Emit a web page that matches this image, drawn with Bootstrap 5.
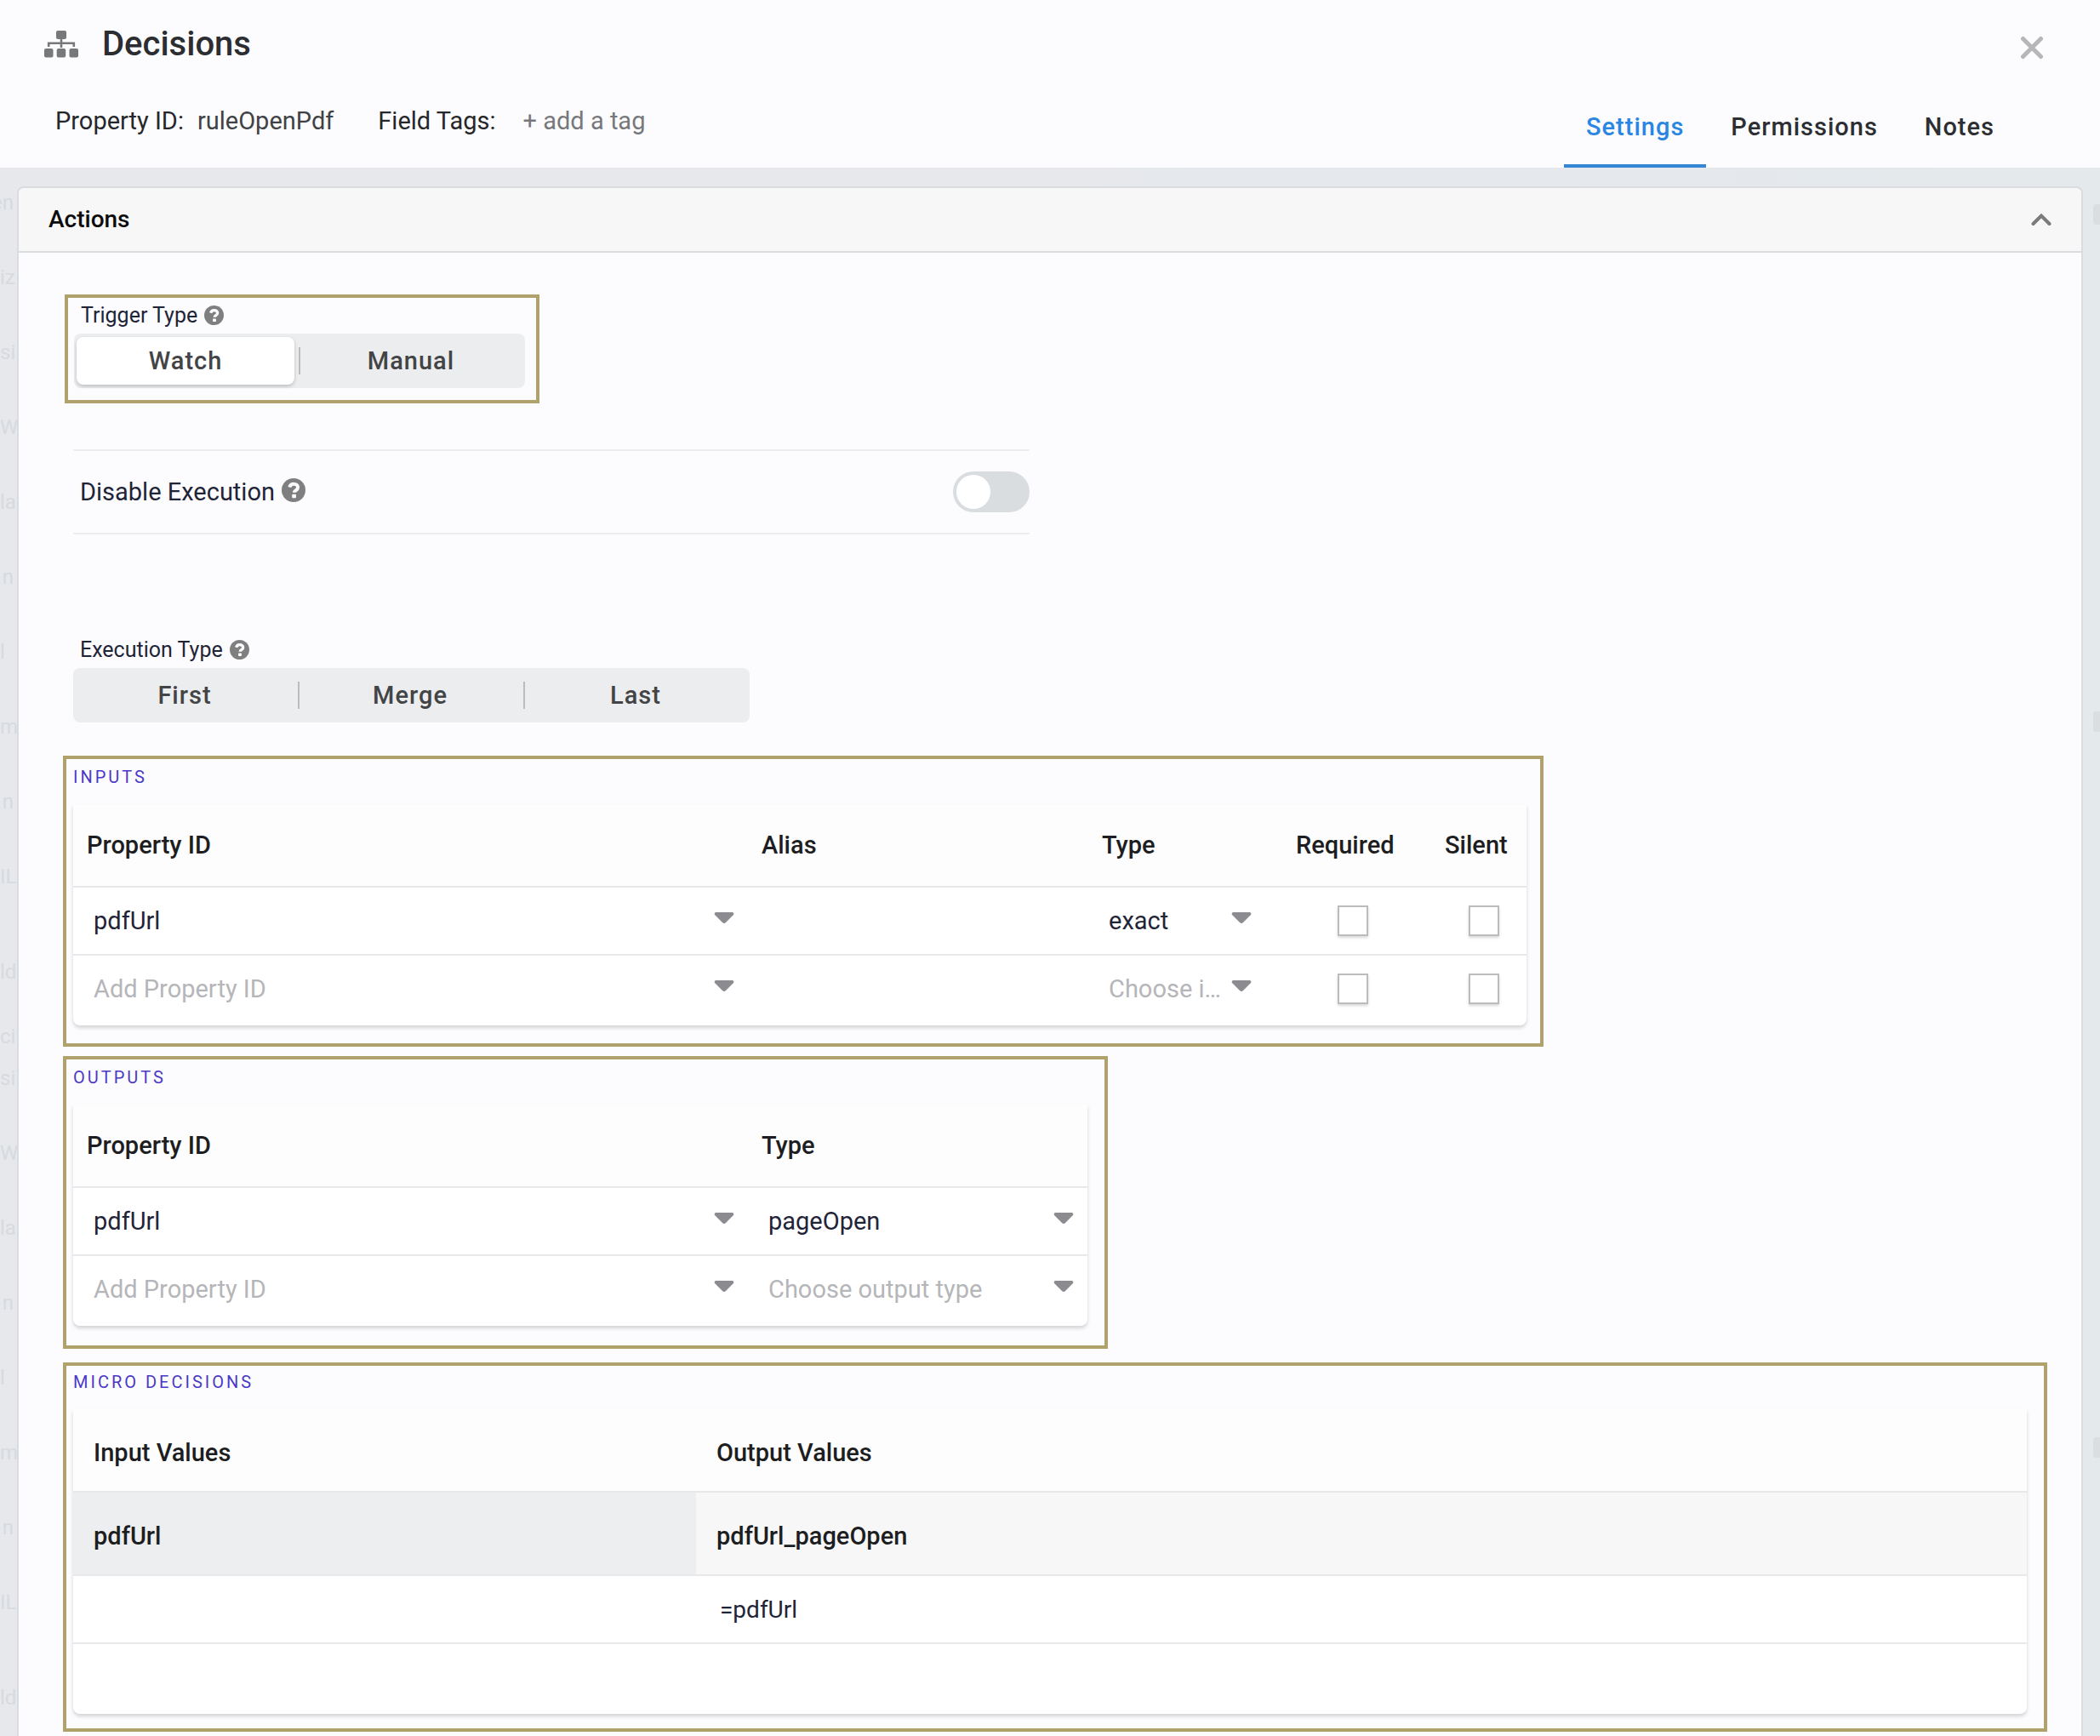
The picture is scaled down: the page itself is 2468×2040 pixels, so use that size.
<!DOCTYPE html>
<html lang="en">
<head>
<meta charset="utf-8">
<meta name="viewport" content="width=device-width, initial-scale=1">
<title>Decisions</title>
<link href="https://cdn.jsdelivr.net/npm/bootstrap@5.3.0/dist/css/bootstrap.min.css" rel="stylesheet">
<style>
  body { font-family: Roboto, "Liberation Sans", sans-serif; font-size: 29px; line-height: 34px; color: #1f2437; background: linear-gradient(to right, #e6e8ec 50%, #e4e9ec); }
  button { background: none; border: 0; padding: 0; }

  /* header */
  .topbar { background: #fcfcff; min-height: 197px; }
  .topbar-main { padding: 22px 0 0 52px; }
  .page-title { font-size: 40px; line-height: 60px; font-weight: 500; color: #2c2d30; }
  .meta { padding: 43px 0 0 13px; color: #26272a; }
  .meta-value { color: #414245; }
  .tag-add { color: #77787b; margin-left: 32px; }
  .close-btn { margin: 42px 66px 0 0; line-height: 0; }
  .tabs { margin-right: 98px; }
  .tabs .nav-link { padding: 29px 26px 27px; border-bottom: 4px solid transparent; font-weight: 500; letter-spacing: 1px; color: #2d2e31; }
  .tabs .nav-item + .nav-item .nav-link { padding-left: 29px; }
  .tabs .nav-link.active { color: #2a86e2; border-color: #3586d6; }

  /* dimmed page showing on both sides of the panel */
  .gutter { flex: 0 0 20px; overflow: hidden; font-size: 24px; color: #d7dade; }
  .gutter-row { height: 88px; line-height: 82px; white-space: nowrap; display: flex; }
  .row-end { justify-content: flex-end; padding-right: 4px; }
  .row-low { margin-top: 24px; height: 76px; }
  .row-tight { height: 49px; }
  .thumb { width: 16px; height: 24px; margin-left: 12px; border-radius: 4px; background: #dadee1; flex: none; }
  .thumb-1 { margin-top: 43px; } .thumb-2 { margin-top: 572px; } .thumb-3 { margin-top: 829px; }

  /* panel */
  .panel { margin-top: 22px; min-width: 0; background: #fcfcff; border: 2px solid #dbdcdf; border-bottom: 0; border-radius: 8px 8px 0 0; }
  .panel-head { height: 76px; padding: 0 35px; background: #f7f7f8; border-bottom: 2px solid #dbdcdf; border-radius: 8px 8px 0 0; }
  .panel-head h2 { font-size: 28px; font-weight: 500; color: #0c0c0d; margin: 0; }
  .panel-body { padding: 49px 40px 3px 52px; }

  .marked { border: 4px solid #b0a26c; }
  .marked-trigger { width: 558px; height: 128px; margin-left: 2px; padding: 4px 7px; }
  .marked-table { max-width: 100%; padding: 7px 20px 0 8px; }
  .w-inputs { width: 1740px; height: 342px; }
  .w-outputs { width: 1228px; height: 344px; margin-top: 11px; }
  .w-micro { height: 434px; margin-top: 16px; padding-top: 5px; }

  .small-label { font-size: 25px; line-height: 34px; padding-left: 8px; margin-bottom: 4px; }
  .small-label svg { margin-left: 8px; margin-top: -2px; }
  .seg { background: #ecedef; border-radius: 8px; height: 64px; width: max-content; }
  .seg label { width: 265px; height: 64px; padding: 4px 6px 4px 3px; position: relative; }
  .seg label span { display: flex; align-items: center; justify-content: center; height: 56px; border-radius: 8px; font-weight: 500; letter-spacing: 1px; color: #434446; }
  .seg input:checked + label span { background: #fff; box-shadow: 0 2px 4px rgba(0,0,0,.2); }
  .seg label + input + label::before { content: ""; position: absolute; left: -1px; top: 16px; width: 2px; height: 32px; background: #bbbcbe; }

  .toggle-row { margin: 54px 0 0 12px; width: 1124px; max-width: 100%; height: 100px; border-top: 2px solid #ededf0; border-bottom: 2px solid #ededf0; padding-left: 8px; }
  .toggle-row svg { margin-left: 8px; margin-top: -8px; }
  .toggle { appearance: none; width: 90px; height: 48px; border-radius: 24px; background: #dadde0; padding: 4px; margin: 0; }
  .toggle::before { content: ""; display: block; width: 40px; height: 40px; border-radius: 50%; background: #fff; }
  .exec { margin: 119px 0 39px 12px; }

  /* tables */
  .section-title { font-size: 20px; line-height: 28px; font-weight: 400; letter-spacing: 3px; color: #4b39c6; margin: 0 0 18px; }
  .sheet { width: 100%; table-layout: fixed; border-collapse: separate; border-spacing: 0; background: #fff; border-radius: 0 0 8px 8px; box-shadow: 0 3px 4px rgba(0,0,0,.16); }
  .sheet th { height: 98px; padding: 0 16px; font-weight: 500; color: #1d1e21; background: #fdfdfe; border-bottom: 2px solid #e7e8ea; white-space: nowrap; }
  .sheet td { height: 80px; padding: 0; border-bottom: 2px solid #e7e8ea; vertical-align: top; }
  .sheet tr:last-child td { height: 82px; border-bottom: 0; }
  .sheet tr:last-child td:first-child { border-radius: 0 0 0 8px; }
  .sheet th.sub-in { background: #edeef0; }
  .sheet th.sub-out { background: #f7f7f8; }
  .w-micro .sheet th { padding: 6px 24px 0; }
  .c-prop { width: 793px; } .c-alias { width: 400px; } .c-type { width: 228px; } .c-req { width: 175px; } .c-in { width: 732px; }
  .cell { display: block; width: 100%; height: 78px; border: 0; background-color: transparent; padding: 0 24px; color: inherit; outline-offset: -4px; }
  .value { padding-left: 28px; font-size: 28px; }
  select.cell { appearance: none; padding: 0 70px 0 24px; text-overflow: ellipsis; white-space: nowrap; overflow: hidden;
    background: url("data:image/svg+xml,%3Csvg xmlns='http://www.w3.org/2000/svg' width='24' height='13'%3E%3Cpath d='M2 0h20q2 1 1 3l-9 9q-2 2-4 0L1 3Q0 1 2 0z' fill='%238b8b90'/%3E%3C/svg%3E") no-repeat right 16px top 29px; }
  select.cell.narrow { background-position: right 36px top 29px; }
  select.hint { color: #b5b6b9; }
  .tick { appearance: none; width: 36px; height: 36px; margin: 21px 0 0; background: #fff; border: 2px solid #bbbcbe; box-shadow: 0 2px 3px rgba(0,0,0,.15); display: block; }
  .tick:checked { background: #2a86e2; }
  .sheet td.t-req { padding-left: 65px; } .sheet td.t-sil { padding-left: 44px; }
</style>
<script src="https://cdn.jsdelivr.net/npm/bootstrap@5.3.0/dist/js/bootstrap.bundle.min.js"></script>
</head>
<body>
<svg width="0" height="0" class="position-absolute" aria-hidden="true">
  <symbol id="help" viewBox="0 0 28 28">
    <circle cx="14" cy="14" r="14" fill="#7f7f80"/>
    <path d="M9.300 10.600C10 8 11.700 6.800 14.200 6.800c2.800 0 4.900 1.600 4.900 4 0 3.500-4.300 3.300-4.300 5.900" fill="none" stroke="#fcfcff" stroke-width="4"/>
    <rect x="12.200" y="18.800" width="4.800" height="4.400" rx="1" fill="#fcfcff"/>
  </symbol>
</svg>
<div class="min-vh-100 d-flex flex-column">
  <header class="topbar d-flex justify-content-between">
    <div class="topbar-main">
      <div class="d-flex align-items-center">
        <svg width="40" height="32" viewBox="0 0 40 32" fill="#77787a" aria-hidden="true">
          <rect x="14" width="12" height="10" rx="2"/><rect y="21" width="10.500" height="10.500" rx="2"/><rect x="14.700" y="21" width="10.500" height="10.500" rx="2"/><rect x="29.500" y="21" width="10.500" height="10.500" rx="2"/>
          <path d="M5.200 19v-4.200h29.600V19M20 9v11" fill="none" stroke="#77787a" stroke-width="2.600"/>
        </svg>
        <h1 class="page-title mb-0 ms-4 ps-1">Decisions</h1>
      </div>
      <div class="meta d-flex">
        <span>Property ID:</span><span class="meta-value ms-3">ruleOpenPdf</span>
        <span class="ms-5 ps-1">Field Tags:</span><button type="button" class="tag-add">+ add a tag</button>
      </div>
    </div>
    <div class="d-flex flex-column align-items-end justify-content-between">
      <button type="button" class="close-btn" aria-label="Close">
        <svg width="28" height="28" viewBox="0 0 28 28" stroke="#b6b6b8" stroke-width="5" stroke-linecap="round"><path d="M3.500 3.500l21 21M24.500 3.500l-21 21"/></svg>
      </button>
      <ul class="nav tabs">
        <li class="nav-item"><a class="nav-link active" aria-current="page" href="#settings">Settings</a></li>
        <li class="nav-item"><a class="nav-link" href="#permissions">Permissions</a></li>
        <li class="nav-item"><a class="nav-link" href="#notes">Notes</a></li>
      </ul>
    </div>
  </header>

  <div class="d-flex flex-grow-1">
    <div class="gutter" aria-hidden="true">
      <div class="gutter-row row-end">en</div><div class="gutter-row">iz</div><div class="gutter-row">si</div><div class="gutter-row">W</div><div class="gutter-row">la</div><div class="gutter-row row-end">n</div><div class="gutter-row">l</div><div class="gutter-row">mr</div><div class="gutter-row row-end">n</div><div class="gutter-row">IL</div><div class="gutter-row row-low">ld</div>
      <div class="gutter-row row-tight">ci</div><div class="gutter-row">si</div><div class="gutter-row">W</div><div class="gutter-row">la</div><div class="gutter-row row-end">n</div><div class="gutter-row">l</div><div class="gutter-row">mr</div><div class="gutter-row row-end">n</div><div class="gutter-row">IL</div><div class="gutter-row row-low">ld</div>
    </div>

    <main class="panel flex-grow-1" id="settings">
      <div class="panel-head d-flex align-items-center justify-content-between">
        <h2>Actions</h2>
        <button type="button" class="d-flex" aria-label="Collapse Actions">
          <svg width="24" height="16" viewBox="0 0 24 16" fill="none" stroke="#7b7b7d" stroke-width="4" stroke-linecap="round"><path d="M2.500 13L12 3.500l9.500 9.500"/></svg>
        </button>
      </div>
      <div class="panel-body">
        <div class="marked marked-trigger">
          <div class="small-label d-flex align-items-center" id="lbl-trigger">Trigger Type<svg width="23" height="23"><use href="#help"/></svg></div>
          <div class="seg d-flex" role="radiogroup" aria-labelledby="lbl-trigger">
            <input class="btn-check" type="radio" name="trigger" id="tr-watch" checked><label for="tr-watch"><span>Watch</span></label>
            <input class="btn-check" type="radio" name="trigger" id="tr-manual"><label for="tr-manual"><span>Manual</span></label>
          </div>
        </div>

        <div class="toggle-row d-flex align-items-center justify-content-between">
          <label for="disable-exec">Disable Execution<svg width="28" height="28"><use href="#help"/></svg></label>
          <input class="toggle" type="checkbox" role="switch" id="disable-exec">
        </div>

        <div class="exec">
          <div class="small-label d-flex align-items-center" id="lbl-exec">Execution Type<svg width="23" height="23"><use href="#help"/></svg></div>
          <div class="seg d-flex" role="radiogroup" aria-labelledby="lbl-exec">
            <input class="btn-check" type="radio" name="exec" id="ex-first"><label for="ex-first"><span>First</span></label>
            <input class="btn-check" type="radio" name="exec" id="ex-merge"><label for="ex-merge"><span>Merge</span></label>
            <input class="btn-check" type="radio" name="exec" id="ex-last"><label for="ex-last"><span>Last</span></label>
          </div>
        </div>

        <section class="marked marked-table w-inputs pe-3">
          <h3 class="section-title">INPUTS</h3>
          <table class="sheet">
            <colgroup><col class="c-prop"><col class="c-alias"><col class="c-type"><col class="c-req"><col></colgroup>
            <thead><tr><th scope="col">Property ID</th><th scope="col">Alias</th><th scope="col">Type</th><th scope="col">Required</th><th scope="col">Silent</th></tr></thead>
            <tbody>
              <tr>
                <td><select class="cell" aria-label="Property ID"><option>pdfUrl</option></select></td>
                <td><input class="cell" type="text" aria-label="Alias"></td>
                <td><select class="cell narrow" aria-label="Type"><option>exact</option></select></td>
                <td class="t-req"><input class="tick" type="checkbox" aria-label="Required"></td>
                <td class="t-sil"><input class="tick" type="checkbox" aria-label="Silent"></td>
              </tr>
              <tr>
                <td><select class="cell hint" aria-label="Property ID"><option>Add Property ID</option></select></td>
                <td><input class="cell" type="text" aria-label="Alias"></td>
                <td><select class="cell narrow hint" aria-label="Type"><option>Choose input type</option></select></td>
                <td class="t-req"><input class="tick" type="checkbox" aria-label="Required"></td>
                <td class="t-sil"><input class="tick" type="checkbox" aria-label="Silent"></td>
              </tr>
            </tbody>
          </table>
        </section>

        <section class="marked marked-table w-outputs">
          <h3 class="section-title">OUTPUTS</h3>
          <table class="sheet">
            <colgroup><col class="c-prop"><col></colgroup>
            <thead><tr><th scope="col">Property ID</th><th scope="col">Type</th></tr></thead>
            <tbody>
              <tr>
                <td><select class="cell" aria-label="Property ID"><option>pdfUrl</option></select></td>
                <td><select class="cell" aria-label="Type"><option>pageOpen</option></select></td>
              </tr>
              <tr>
                <td><select class="cell hint" aria-label="Property ID"><option>Add Property ID</option></select></td>
                <td><select class="cell hint" aria-label="Type"><option>Choose output type</option></select></td>
              </tr>
            </tbody>
          </table>
        </section>

        <section class="marked marked-table w-micro">
          <h3 class="section-title">MICRO DECISIONS</h3>
          <table class="sheet">
            <colgroup><col class="c-in"><col></colgroup>
            <thead>
              <tr><th scope="col">Input Values</th><th scope="col">Output Values</th></tr>
              <tr><th scope="col" class="sub-in">pdfUrl</th><th scope="col" class="sub-out">pdfUrl_pageOpen</th></tr>
            </thead>
            <tbody>
              <tr><td><input class="cell value" type="text" aria-label="pdfUrl"></td><td><input class="cell value" type="text" value="=pdfUrl" aria-label="pdfUrl_pageOpen"></td></tr>
              <tr><td><input class="cell value" type="text" aria-label="pdfUrl"></td><td><input class="cell value" type="text" aria-label="pdfUrl_pageOpen"></td></tr>
            </tbody>
          </table>
        </section>
      </div>
    </main>

    <div class="gutter" aria-hidden="true">
      <div class="thumb thumb-1"></div><div class="thumb thumb-2"></div><div class="thumb thumb-3"></div>
    </div>
  </div>
</div>
</body>
</html>
